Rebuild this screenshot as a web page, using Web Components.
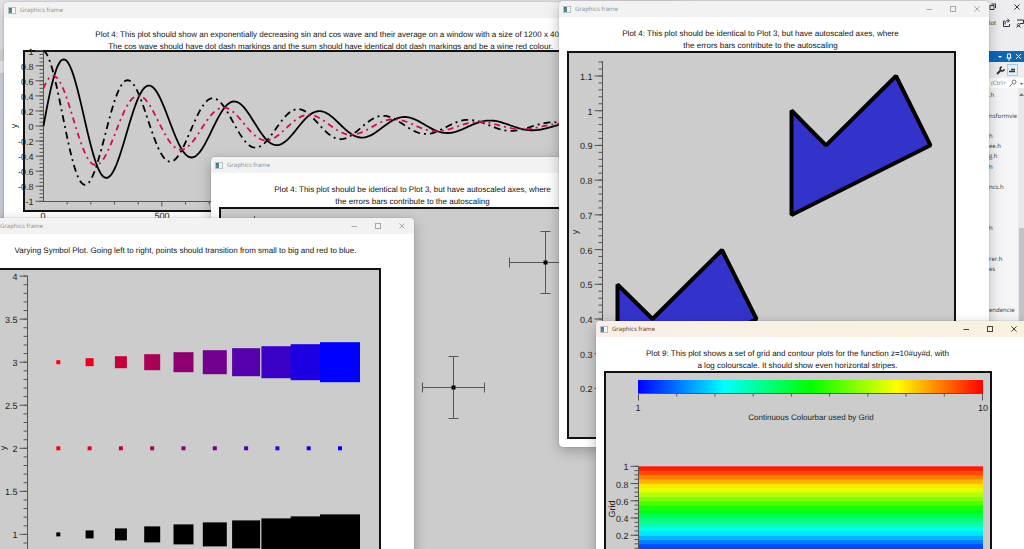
<!DOCTYPE html>
<html lang="en">
<head>
<meta charset="utf-8">
<title>Plot windows</title>
<style>
  html, body { margin: 0; height: 100%; }
  body { font-family: "Liberation Sans", Arial, sans-serif; text-rendering: geometricPrecision; overflow: hidden; }
</style>
</head>
<body>
<desk-top>
  <ide-panel></ide-panel>
  <graphics-window class="waves">
    <span slot="caption">Plot 4: This plot should show an exponentially decreasing sin and cos wave and their average on a window with a size of 1200 x 400.<br>The cos wave should have dot dash markings and the sum should have identical dot dash markings and be a wine red colour.</span>
    <wave-plot></wave-plot>
  </graphics-window>
  <graphics-window class="errors">
    <span slot="caption">Plot 4: This plot should be identical to Plot 3, but have autoscaled axes, where<br>the errors bars contribute to the autoscaling</span>
    <error-plot></error-plot>
  </graphics-window>
  <graphics-window class="symbols">
    <span slot="caption">Varying Symbol Plot. Going left to right, points should transition from small to big and red to blue.</span>
    <symbol-plot></symbol-plot>
  </graphics-window>
  <graphics-window class="polygons">
    <span slot="caption">Plot 4: This plot should be identical to Plot 3, but have autoscaled axes, where<br>the errors bars contribute to the autoscaling</span>
    <polygon-plot></polygon-plot>
  </graphics-window>
  <graphics-window class="contours" active>
    <span slot="caption">Plot 9: This plot shows a set of grid and contour plots for the function z=10#uy#d, with<br>a log colourscale. It should show even horizontal stripes.</span>
    <contour-plot></contour-plot>
  </graphics-window>
</desk-top>

<script>
class DeskTop extends HTMLElement {
  constructor() {
    super();
    this.attachShadow({ mode: 'open' }).innerHTML = `
      <style>
        :host { display: flex; justify-content: flex-end; position: relative; height: 100vh; overflow: hidden; background: linear-gradient(#e6e6ec 50px, #dcdad6 50px, #dcdad6 61px, #f0f1f5 61px, #f0f1f5 73px, #d3d7e2 73px); }
        ::slotted(graphics-window) { position: absolute; width: 430px; height: 446px; }
        ::slotted(.waves) { left: 4px; top: 2px; width: 680px; height: 230px; }
        ::slotted(.errors) { left: 211px; top: 157px; }
        ::slotted(.symbols) { left: -16px; top: 218px; }
        ::slotted(.polygons) { left: 559px; top: 1px; }
        ::slotted(.contours) { left: 596px; top: 321px; }
      </style>
      <slot></slot>`;
  }
}

class WindowControls extends HTMLElement {
  constructor() {
    super();
    this.attachShadow({ mode: 'open' }).innerHTML = `
      <style>
        :host { display: flex; }
        button { width: 24px; height: 16px; padding: 0; border: 0; background: none; color: inherit; display: grid; place-items: center; }
        svg { width: 8px; height: 8px; fill: none; stroke: currentColor; }
      </style>
      <button aria-label="Minimise"><svg viewBox="0 0 8 8"><path d="M1.5 4.5h5.5"/></svg></button>
      <button aria-label="Maximise"><svg viewBox="0 0 8 8"><rect x="1.5" y="1.5" width="5" height="5"/></svg></button>
      <button aria-label="Close"><svg viewBox="0 0 8 8"><path d="M1.4 1.4l5.2 5.2M6.6 1.4L1.4 6.6"/></svg></button>`;
  }
}

class GraphicsWindow extends HTMLElement {
  constructor() {
    super();
    this.attachShadow({ mode: 'open' }).innerHTML = `
      <style>
        :host { display: flex; flex-direction: column; box-sizing: border-box; background: #fff; border-radius: 4px; overflow: hidden; box-shadow: 0 0 1px rgba(0,0,0,.5), 0 4px 14px rgba(0,0,0,.26); }
        header { flex: none; display: flex; align-items: center; height: 16px; padding-left: 4px; background: #f2f2f2; color: #8a8a8a; }
        :host([active]) header { background: linear-gradient(90deg, #f9eee9, #f8f1e3 50%, #f8f2de); color: #333; }
        h2 { flex: 1; margin: 0 0 0 4px; font: 400 6px/16px "Open Sans", "Noto Sans", sans-serif; }
        .logo { width: 8px; height: 7px; }
        window-controls { color: #a8a8a8; }
        :host([active]) window-controls { color: #444; }
        p { flex: none; margin: 0; padding: 11px 27px 0 0; height: 23px; font-size: 8px; line-height: 12px; text-align: center; white-space: nowrap; color: #111; }
      </style>
      <header>
        <svg class="logo" viewBox="0 0 8 7"><rect x=".5" y=".5" width="7" height="6" fill="#f7f7f7" stroke="#b9bec2"/><rect x="1" y="1" width="3" height="5" fill="#4b8f8c"/><path d="M1 1h2v2H1z" fill="#3f6fa8"/></svg>
        <h2>Graphics frame</h2>
        <window-controls></window-controls>
      </header>
      <p><slot name="caption"></slot></p>
      <slot></slot>`;
  }
}

/* Base of all plots: box is the drawn area as "x y width height". */
class BasePlot extends HTMLElement {
  constructor() {
    super();
    this.attachShadow({ mode: 'open' }).innerHTML = `
      <style>
        :host { display: block; color: #222; }
        svg { display: block; width: 100%; overflow: visible; }
        text { font-size: 9px; fill: currentColor; }
        .name { font-size: 8px; }
        .end { text-anchor: end; }
        .mid { text-anchor: middle; }
        .frame { fill: #ccc; stroke: #111; stroke-width: 2; }
        .axis { fill: none; stroke: #555; stroke-width: 1; }
      </style>
      <svg viewBox="${this.box}">${this.draw()}</svg>`;
  }
  frame(x, y, w, h) { return `<rect class="frame" x="${x}" y="${y}" width="${w}" height="${h}"/>`; }
  /* Vertical axis: labels sit on major ticks, minor ticks point left too. */
  yAxis({ x, top, bottom, at, major, minor }) {
    let d = `M${x} ${top}V${bottom}`;
    let labels = '';
    for (const v of major) {
      d += `M${x - 8} ${at(v)}h8`;
      labels += `<text class="end" x="${x - 10}" y="${at(v) + 4}">${v}</text>`;
    }
    for (const v of minor) d += `M${x - 4} ${at(v)}h4`;
    return `<path class="axis" d="${d}"/>${labels}`;
  }
  side(label, x, y) { return `<text class="mid" transform="translate(${x} ${y}) rotate(-90)">${label}</text>`; }
}

const range = (from, to, step) => {
  const n = Math.round((to - from) / step);
  return Array.from({ length: n + 1 }, (_, i) => Number((from + i * step).toFixed(3)));
};

class WavePlot extends BasePlot {
  get box() { return '4 52 680 180'; }
  draw() {
    const at = v => 126 - 75.3 * v;
    const px = u => 43.5 + 0.2367 * u;
    const decay = u => Math.exp(-u / 720);
    const rad = u => u * Math.PI / 180;
    const curve = f => 'M' + range(0, 2400, 6).map(u => `${px(u).toFixed(2)} ${at(f(u)).toFixed(2)}`).join('L');
    const sin = u => decay(u) * Math.sin(rad(u));
    const cos = u => decay(u) * Math.cos(rad(u));
    let ticks = `M43.5 201.5H640`;
    for (const u of range(100, 2400, 100)) ticks += `M${px(u)} 201.5v${u % 500 ? 3 : 5}`;
    return this.frame(24, 51, 614, 160)
      + this.yAxis({ x: 43.5, top: 51, bottom: 202, at, major: range(-1, 1, .2), minor: range(-1, 1, .05) })
      + `<path class="axis" d="${ticks}"/>
         <text class="mid" x="43" y="219">0</text><text class="mid" x="162" y="219">500</text>`
      + this.side('y', 17, 126)
      + `<g fill="none" stroke-width="1.8">
          <path stroke="#000" d="${curve(sin)}"/>
          <path stroke="#000" stroke-dasharray="7 4 2 4" d="${curve(cos)}"/>
          <path stroke="#d01040" stroke-dasharray="6 4 2 4" d="${curve(u => (sin(u) + cos(u)) / 2)}"/>
        </g>`;
  }
}

class ErrorPlot extends BasePlot {
  get box() { return '211 207 430 396'; }
  draw() {
    const bar = (x, y, rx, ry) => `
      <path class="axis" d="M${x - rx} ${y}h${2 * rx}M${x} ${y - ry}v${2 * ry}M${x - rx} ${y - 5}v10M${x + rx} ${y - 5}v10M${x - 5} ${y - ry}h10M${x - 5} ${y + ry}h10"/>
      <rect x="${x - 2}" y="${y - 2}" width="4" height="4"/>`;
    return this.frame(220, 208, 387, 387)
      + `<path class="axis" d="M254.5 216V500"/>`
      + bar(545.5, 262.5, 36, 31) + bar(453.5, 387.5, 31, 31);
  }
}

class SymbolPlot extends BasePlot {
  get box() { return '-16 268 430 396'; }
  draw() {
    const at = v => 620.5 - 86.1 * v;
    let out = this.frame(-7, 269, 387, 387)
      + this.yAxis({ x: 27.5, top: 276, bottom: 560, at, major: range(1, 4, .5), minor: range(.5, 4, .1) })
      + this.side('y', 6, 448);
    for (let i = 0; i < 10; i++) {
      const x = 58.3 + 31.3 * i;
      const c = `rgb(${Math.round(255 - 28.33 * i)},0,${Math.round(28.33 * i)})`;
      const square = (v, s, fill) => `<rect x="${(x - s / 2).toFixed(1)}" y="${(at(v) - s / 2).toFixed(1)}" width="${s}" height="${s}" fill="${fill}"/>`;
      out += square(3, 4 + 4 * i, c) + square(2, 4, c) + square(1, 4 + 4 * i, '#000');
    }
    return out;
  }
}

class PolygonPlot extends BasePlot {
  get box() { return '559 51 430 396'; }
  draw() {
    const at = v => 457.9 - 347.2 * v;
    return this.frame(568, 52, 387, 386)
      + this.yAxis({ x: 602.5, top: 61, bottom: 430, at, major: range(.2, 1.1, .1), minor: range(.12, 1.14, .02) })
      + this.side('y', 578, 232)
      + `<g fill="#33c" stroke="#000" stroke-width="4" stroke-linejoin="bevel">
          <path d="M791.5 110.5L826 145.3 896 76 930.5 145.3 791.5 215Z"/>
          <path d="M617.5 284.5L652.5 319 722 250 756.5 319 617.5 389Z"/>
        </g>`;
  }
}

class ContourPlot extends BasePlot {
  get box() { return '596 371 430 396'; }
  draw() {
    const at = v => 552.5 - 86.2 * v;
    const stops = ['#00f', '#0ff', '#0f0', '#ff0', '#f00'];
    const rgb = [[0, 0, 255], [0, 255, 255], [0, 255, 0], [255, 255, 0], [255, 0, 0]];
    const colour = t => {
      const k = Math.min(3, Math.floor(t * 4)), f = t * 4 - k;
      return `rgb(${rgb[k].map((c, i) => Math.round(c + (rgb[k + 1][i] - c) * f)).join(',')})`;
    };
    let ticks = 'M638.5 393.5H983M638.5 393.5v7M982.5 393.5v7';
    for (let i = 1; i < 9; i++) ticks += `M${638.5 + i * 38.22} 393.5v3`;
    let bands = '';
    for (let i = 0; i < 20; i++) {
      bands += `<rect x="639" y="${at((i + 1) / 20).toFixed(2)}" width="344" height="4.6" fill="${colour((i + .5) / 20)}"/>`;
    }
    return `<defs><linearGradient id="scale">${stops.map((c, i) => `<stop offset="${i / 4}" stop-color="${c}"/>`).join('')}</linearGradient></defs>`
      + this.frame(605, 372, 386, 386)
      + `<rect x="638" y="380" width="345" height="13" fill="url(#scale)"/>
         <path class="axis" d="${ticks}"/>
         <text class="mid" x="638" y="411">1</text><text class="mid" x="983" y="411">10</text>
         <text class="mid name" x="811" y="420">Continuous Colourbar used by Grid</text>`
      + bands
      + this.yAxis({ x: 638.5, top: 466, bottom: 552, at, major: range(.2, 1, .2), minor: range(0, 1, .05) })
      + this.side('Grid', 615, 509);
  }
}

class IdePanel extends HTMLElement {
  constructor() {
    super();
    const rows = ['.h', '', 'nsformvie', '', 'h', 'ee.h', 'g.h', 'h', '', 'ncs.h', '', '', '', 'h', '', '', 'rer.h', 'es', '', '', '', 'endencie'];
    this.attachShadow({ mode: 'open' }).innerHTML = `
      <style>
        :host { display: flex; flex-direction: column; width: 35px; background: #f5f5f7; color: #333; font: 6px/10px "Open Sans", "Noto Sans", sans-serif; }
        svg { display: block; fill: none; stroke: currentColor; }
        .row { display: flex; align-items: center; justify-content: space-between; box-sizing: border-box; flex: none; }
        .top { height: 14px; padding: 0 3px 0 0; background: #ececf1; }
        .menu { height: 37px; padding: 3px 0 0; align-items: flex-start; background: #ececf1; }
        .menu span { line-height: 12px; }
        .bar { height: 11px; background: #0b68b9; color: #fff; justify-content: flex-end; gap: 3px; padding-right: 2px; }
        .tools { height: 16px; background: #eeeef2; justify-content: flex-end; gap: 2px; padding-right: 6px; }
        .picked { width: 11px; height: 12px; border: 1px solid #9ccbf2; box-sizing: border-box; background: #e2f0fb; }
        .search { height: 10px; background: #fff; padding-left: 2px; color: #777; }
        .body { flex: 1; display: flex; justify-content: space-between; }
        ul { list-style: none; margin: 2px 0 0; padding: 0; height: 225px; display: grid; grid-template-rows: repeat(22, 1fr); align-items: center; }
        .scroll { width: 6px; background: #e8e8ec; display: flex; flex-direction: column; align-items: center; padding-top: 4px; gap: 132px; }
        .scroll i { width: 5px; flex: 1; background: #c2c3c9; }
      </style>
      <div class="row top">
        <svg width="7" height="8"><path d="M1 2.5h4v4h-4zM2.5 1h4v4"/></svg>
        <svg width="8" height="8"><path d="M1.5 1.5l5 5M6.5 1.5l-5 5"/></svg>
      </div>
      <div class="row menu"><span>lot</span>
        <svg width="9" height="12"><path d="M3 4H1.5v5.5h6V7M3 7.5c0-3 1-4 3.5-4M5.5 2l2 1.7-2 1.7"/></svg>
        <svg width="8" height="12"><path d="M1 3h6.5v3.5H4M2.5 6.5a1.2 1.2 0 1 0 .1 0M.5 10.5l2-2 2 2"/></svg>
      </div>
      <div class="row bar">
        <svg width="6" height="6"><path d="M1 2h4l-2 2z" fill="#fff" stroke="none"/></svg>
        <svg width="6" height="8"><path d="M1.5 1h3v4M1.5 1v4M.5 5h5M3 5v3"/></svg>
        <svg width="7" height="7"><path d="M1 1l5 5M6 1l-5 5"/></svg>
      </div>
      <div class="row tools">
        <svg width="9" height="9" viewBox="0 0 9 9"><path d="M1 8l4-4" stroke-width="2"/><path d="M6 1a2 2 0 1 0 2.2 2.2" stroke-width="1.6"/></svg>
        <div class="picked"><svg width="9" height="10"><path d="M1 6.5h6M3 4.5h4" stroke-width="1.5"/></svg></div>
      </div>
      <div class="row search"><span>(Ctrl+</span>
        <svg width="8" height="8"><circle cx="5" cy="3" r="2"/><path d="M3.5 4.5l-3 3"/></svg>
        <svg width="5" height="5"><path d="M1 2h3L2.5 4z" fill="#555" stroke="none"/></svg>
      </div>
      <div class="body">
        <ul>${rows.map(r => `<li>${r}</li>`).join('')}</ul>
        <div class="scroll"><svg width="5" height="4"><path d="M0 4h5L2.5 1z" fill="#777" stroke="none"/></svg><i></i></div>
      </div>`;
  }
}

customElements.define('window-controls', WindowControls);
customElements.define('graphics-window', GraphicsWindow);
customElements.define('wave-plot', WavePlot);
customElements.define('error-plot', ErrorPlot);
customElements.define('symbol-plot', SymbolPlot);
customElements.define('polygon-plot', PolygonPlot);
customElements.define('contour-plot', ContourPlot);
customElements.define('ide-panel', IdePanel);
customElements.define('desk-top', DeskTop);
</script>
</body>
</html>
